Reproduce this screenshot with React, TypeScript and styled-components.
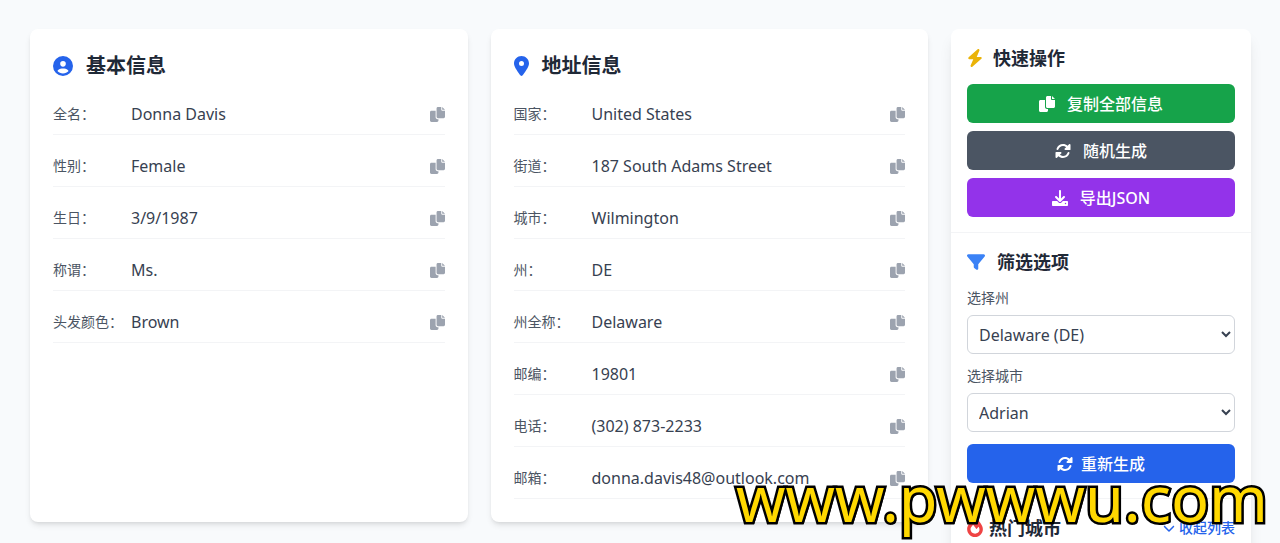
import React from "react";
import styled, { createGlobalStyle } from "styled-components";
import { FaBolt, FaChevronDown, FaCircleUser, FaFilter, FaLocationDot } from "react-icons/fa6";

const GlobalStyle = createGlobalStyle`
  *, *::before, *::after { box-sizing: border-box; }
  html { scrollbar-width: none; }
  body {
    margin: 0;
    background: #f8fafc;
    color: #1f2937;
    font-family: "Noto Sans", "Noto Sans CJK SC", sans-serif;
    font-size: 16px;
    line-height: 24px;
  }
  button, select { font: inherit; }
`;

const Page = styled.main`
  display: grid;
  grid-template-columns: minmax(0, 1fr) minmax(0, 1fr) 300px;
  align-items: start;
  gap: 23px;
  padding: 29px 29px 0 30px;
`;

const InfoColumns = styled.div`
  grid-column: span 2;
  display: grid;
  grid-template-columns: repeat(2, minmax(0, 1fr));
  gap: 23px;
`;

const Card = styled.section`
  padding: 23px;
  border-radius: 8px;
  background: #fff;
  box-shadow: 0 4px 6px -1px rgba(0, 0, 0, 0.1), 0 2px 4px -2px rgba(0, 0, 0, 0.1);
`;

const CardTitle = styled.h2`
  display: flex;
  align-items: center;
  gap: 13px;
  margin: 0 0 22px;
  font-size: 20px;
  font-weight: 700;
  line-height: 28px;

  svg { color: #2563eb; }
`;

const PinIcon = styled(FaLocationDot)`
  width: 15px;
  height: 20px;
`;

const Fields = styled.dl`
  display: grid;
  gap: 19px;
  margin: 0;
`;

const Field = styled.div`
  display: flex;
  align-items: center;
  padding-bottom: 8px;
  border-bottom: 1px solid #f3f4f6;
`;

const FieldName = styled.dt`
  width: 78px;
  flex: none;
  color: #4b5563;
  font-size: 14px;
`;

const FieldValue = styled.dd`
  flex: 1;
  min-width: 0;
  margin: 0;
  color: #374151;
`;

const CopyButton = styled.button`
  display: flex;
  padding: 0;
  border: 0;
  background: none;
  color: #9ca3af;
  cursor: pointer;
`;

const Sidebar = styled.aside`
  border-radius: 8px;
  background: #fff;
  box-shadow: 0 10px 15px -3px rgba(0, 0, 0, 0.1), 0 4px 6px -4px rgba(0, 0, 0, 0.1);
`;

const Panel = styled.section`
  padding: 16px 16px 15px;

  & + & { border-top: 1px solid #f3f4f6; }
`;

const PanelHead = styled.div`
  display: flex;
  align-items: center;
  justify-content: space-between;
  margin-bottom: 13px;
`;

const PanelTitle = styled.h3<{ $icon: string; $iconWidth: number; $gap: number }>`
  display: flex;
  align-items: center;
  gap: ${(p) => p.$gap}px;
  margin: 0;
  font-size: 18px;
  font-weight: 700;
  line-height: 26px;

  svg {
    width: ${(p) => p.$iconWidth}px;
    height: 18px;
    color: ${(p) => p.$icon};
  }
`;

const Stack = styled.div<{ $gap: number }>`
  display: grid;
  gap: ${(p) => p.$gap}px;
`;

const ActionButton = styled.button<{ $color: string; $gap: number }>`
  display: flex;
  align-items: center;
  justify-content: center;
  gap: ${(p) => p.$gap}px;
  width: 100%;
  height: 39px;
  padding: 0 16px;
  border: 0;
  border-radius: 6px;
  background: ${(p) => p.$color};
  color: #fff;
  font-size: 16px;
  font-weight: 500;
  cursor: pointer;
`;

const SelectField = styled.label`
  display: grid;
  gap: 7px;
  color: #4b5563;
  font-size: 14px;
  line-height: 20px;
`;

const Select = styled.select`
  width: 100%;
  height: 39px;
  padding: 0 7px;
  border: 1px solid #d1d5db;
  border-radius: 6px;
  background: #fff;
  color: #374151;
  font-size: 16px;
`;

const ToggleButton = styled.button`
  display: flex;
  align-items: center;
  gap: 4px;
  padding: 0;
  border: 0;
  background: none;
  color: #2563eb;
  font-size: 14px;
  font-weight: 500;
  line-height: 20px;
  cursor: pointer;
`;

const Watermark = styled.div`
  position: fixed;
  right: 12px;
  bottom: 3px;
  color: #ffd800;
  font-family: "Noto Sans", sans-serif;
  font-size: 63px;
  font-weight: 400;
  line-height: 84px;
  -webkit-text-stroke: 5px #000;
  paint-order: stroke fill;
  text-shadow: 2px 2px 0 #000;
  pointer-events: none;
`;

type IconProps = { size?: number };

const CopyIcon = ({ size = 15 }: IconProps) => (
  <svg width={size} height={size} viewBox="0 0 512 512" fill="currentColor" aria-hidden="true">
    <path d="M384 96V0H272c-26.5 0-48 21.5-48 48v288c0 26.5 21.5 48 48 48h192c26.5 0 48-21.5 48-48V128h-95.1C398.4 128 384 113.6 384 96zM416 0v96h96L416 0zM192 352V128H48c-26.5 0-48 21.5-48 48v288c0 26.5 21.5 48 48 48h192c26.5 0 48-21.5 48-48v-48h-32c-35.3 0-64-28.7-64-64z" />
  </svg>
);

const RotateIcon = () => (
  <svg width={16} height={16} viewBox="0 0 512 512" fill="currentColor" aria-hidden="true">
    <path d="M449.900 39.960l-48.500 48.530C362.500 53.190 311.400 32 256 32C161.500 32 78.590 92.340 49.580 182.200c-5.438 16.810 3.797 34.880 20.610 40.280c16.970 5.500 34.860-3.812 40.300-20.590C130.900 138.500 189.400 96 256 96c37.960 0 73 14.180 100.200 37.800L311.100 178C295.100 194.800 306.800 223.400 330.400 224h146.900C487.700 223.700 496 215.300 496 204.900V59.040C496 34.990 466.900 22.950 449.900 39.960z" />
    <path d="M62.100 472.040l48.500-48.530C149.500 458.810 200.600 480 256 480C350.500 480 433.410 419.660 462.420 329.800c5.438-16.810-3.797-34.880-20.610-40.280c-16.970-5.500-34.860 3.812-40.300 20.590C381.100 373.500 322.600 416 256 416c-37.960 0-73-14.180-100.200-37.800L200.900 334C216.900 317.200 205.200 288.600 181.600 288H34.700C24.300 288.300 16 296.700 16 307.100V452.960C16 477.010 45.100 489.050 62.100 472.040z" />
  </svg>
);

const DownloadIcon = () => (
  <svg width={16} height={16} viewBox="0 0 512 512" fill="currentColor" aria-hidden="true">
    <path d="M480 352h-133.500l-45.250 45.250C289.200 409.300 273.100 416 256 416s-33.160-6.656-45.250-18.750L165.500 352H32c-17.670 0-32 14.330-32 32v96c0 17.670 14.330 32 32 32h448c17.670 0 32-14.330 32-32v-96C512 366.300 497.700 352 480 352zM432 456c-13.200 0-24-10.800-24-24c0-13.200 10.800-24 24-24s24 10.800 24 24C456 445.200 445.200 456 432 456zM233.400 374.600C239.600 380.900 247.800 384 256 384s16.380-3.125 22.620-9.375l128-128c12.490-12.500 12.490-32.750 0-45.250c-12.500-12.500-32.760-12.500-45.250 0L288 274.800V32c0-17.670-14.330-32-32-32C238.300 0 224 14.330 224 32v242.800L150.600 201.400c-12.490-12.500-32.750-12.500-45.250 0c-12.490 12.500-12.490 32.750 0 45.250L233.400 374.600z" />
  </svg>
);

const FireIcon = () => (
  <svg viewBox="0 0 448 512" fill="currentColor" aria-hidden="true">
    <path d="M323.500 51.250C302.800 70.500 284 90.750 267.400 111.100C240.100 73.620 206.200 35.500 168 0C69.750 91.170 0 209.100 0 281.600C0 408.900 100.200 512 224 512s224-103.100 224-230.400C448 227.400 396.100 118.500 323.500 51.250zM304.100 391.900C282.400 407 255.800 416 226.900 416c-72.130 0-130.900-47.730-130.900-125.200c0-38.630 24.240-72.640 72.740-130.800c7 8 98.880 125.400 98.880 125.400l58.630-66.880c4.125 6.750 7.867 13.520 11.240 19.950C364.900 290.600 353.400 357.400 304.100 391.900z" />
  </svg>
);

const basicInfo = [
  ["全名", "Donna Davis"],
  ["性别", "Female"],
  ["生日", "3/9/1987"],
  ["称谓", "Ms."],
  ["头发颜色", "Brown"],
];

const addressInfo = [
  ["国家", "United States"],
  ["街道", "187 South Adams Street"],
  ["城市", "Wilmington"],
  ["州", "DE"],
  ["州全称", "Delaware"],
  ["邮编", "19801"],
  ["电话", "(302) 873-2233"],
  ["邮箱", "donna.davis48@outlook.com"],
];

const FieldList = ({ items }: { items: string[][] }) => (
  <Fields>
    {items.map(([name, value]) => (
      <Field key={name}>
        <FieldName>{name}：</FieldName>
        <FieldValue>{value}</FieldValue>
        <CopyButton type="button" aria-label={`复制${name}`}>
          <CopyIcon />
        </CopyButton>
      </Field>
    ))}
  </Fields>
);

export default function App() {
  return (
    <>
      <GlobalStyle />
      <Page>
        <InfoColumns>
          <Card>
            <CardTitle><FaCircleUser size={20} />基本信息</CardTitle>
            <FieldList items={basicInfo} />
          </Card>
          <Card>
            <CardTitle><PinIcon />地址信息</CardTitle>
            <FieldList items={addressInfo} />
          </Card>
        </InfoColumns>
        <Sidebar>
          <Panel>
            <PanelHead>
              <PanelTitle $icon="#eab308" $iconWidth={16} $gap={10}><FaBolt />快速操作</PanelTitle>
            </PanelHead>
            <Stack $gap={8}>
              <ActionButton type="button" $color="#16a34a" $gap={12}><CopyIcon size={16} />复制全部信息</ActionButton>
              <ActionButton type="button" $color="#4b5563" $gap={12}><RotateIcon />随机生成</ActionButton>
              <ActionButton type="button" $color="#9333ea" $gap={12}><DownloadIcon />导出JSON</ActionButton>
            </Stack>
          </Panel>
          <Panel>
            <PanelHead>
              <PanelTitle $icon="#3b82f6" $iconWidth={18} $gap={12}><FaFilter />筛选选项</PanelTitle>
            </PanelHead>
            <Stack $gap={12}>
              <SelectField>
                选择州
                <Select defaultValue="DE"><option value="DE">Delaware (DE)</option></Select>
              </SelectField>
              <SelectField>
                选择城市
                <Select defaultValue="Adrian"><option>Adrian</option></Select>
              </SelectField>
              <ActionButton type="button" $color="#2563eb" $gap={8}><RotateIcon />重新生成</ActionButton>
            </Stack>
          </Panel>
          <Panel>
            <PanelHead>
              <PanelTitle $icon="#ef4444" $iconWidth={16} $gap={6}><FireIcon />热门城市</PanelTitle>
              <ToggleButton type="button"><FaChevronDown size={12} />收起列表</ToggleButton>
            </PanelHead>
          </Panel>
        </Sidebar>
      </Page>
      <Watermark>www.pwwwu.com</Watermark>
    </>
  );
}
